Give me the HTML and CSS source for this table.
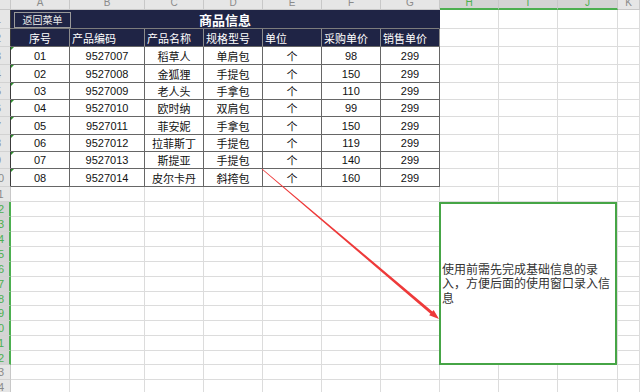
FILE: index.html
```html
<!DOCTYPE html>
<html lang="zh">
<head>
<meta charset="utf-8">
<title>商品信息</title>
<link rel="stylesheet" href="styles.css">
</head>
<body>
<div class="sheet">
  <div class="row hdr">
    <span class="corner"></span>
    <span>A</span><span>B</span><span>C</span><span>D</span><span>E</span><span>F</span><span>G</span><span class="sel">H</span><span class="sel">I</span><span class="sel">J</span><span>K</span>
  </div>
  <div class="row h19">
    <span class="rn tb"><em>1</em></span>
    <span class="title"><button class="back">返回菜单</button>商品信息</span>
    <span></span><span></span><span></span><span></span>
  </div>
  <div class="row h18">
    <span class="rn tb"><em>2</em></span>
    <span class="th a">序号</span><span class="th">产品编码</span><span class="th">产品名称</span><span class="th">规格型号</span><span class="th">单位</span><span class="th">采购单价</span><span class="th">销售单价</span>
    <span></span><span></span><span></span><span></span>
  </div>
  <div class="row h18">
    <span class="rn tb"><em>3</em></span>
    <span class="t a">01</span><span class="t">9527007</span><span class="t">稻草人</span><span class="t">单肩包</span><span class="t">个</span><span class="t">98</span><span class="t">299</span>
    <span></span><span></span><span></span><span></span>
  </div>
  <div class="row h18">
    <span class="rn tb"><em>4</em></span>
    <span class="t a">02</span><span class="t">9527008</span><span class="t">金狐狸</span><span class="t">手提包</span><span class="t">个</span><span class="t">150</span><span class="t">299</span>
    <span></span><span></span><span></span><span></span>
  </div>
  <div class="row h17">
    <span class="rn tb"><em>5</em></span>
    <span class="t a">03</span><span class="t">9527009</span><span class="t">老人头</span><span class="t">手拿包</span><span class="t">个</span><span class="t">110</span><span class="t">299</span>
    <span></span><span></span><span></span><span></span>
  </div>
  <div class="row h17">
    <span class="rn tb"><em>6</em></span>
    <span class="t a">04</span><span class="t">9527010</span><span class="t">欧时纳</span><span class="t">双肩包</span><span class="t">个</span><span class="t">99</span><span class="t">299</span>
    <span></span><span></span><span></span><span></span>
  </div>
  <div class="row h18">
    <span class="rn tb"><em>7</em></span>
    <span class="t a">05</span><span class="t">9527011</span><span class="t">菲安妮</span><span class="t">手拿包</span><span class="t">个</span><span class="t">150</span><span class="t">299</span>
    <span></span><span></span><span></span><span></span>
  </div>
  <div class="row h17">
    <span class="rn tb"><em>8</em></span>
    <span class="t a">06</span><span class="t">9527012</span><span class="t">拉菲斯丁</span><span class="t">手提包</span><span class="t">个</span><span class="t">119</span><span class="t">299</span>
    <span></span><span></span><span></span><span></span>
  </div>
  <div class="row h17">
    <span class="rn tb"><em>9</em></span>
    <span class="t a">07</span><span class="t">9527013</span><span class="t">斯提亚</span><span class="t">手提包</span><span class="t">个</span><span class="t">140</span><span class="t">299</span>
    <span></span><span></span><span></span><span></span>
  </div>
  <div class="row h18">
    <span class="rn tb"><em>10</em></span>
    <span class="t a">08</span><span class="t">9527014</span><span class="t">皮尔卡丹</span><span class="t">斜挎包</span><span class="t">个</span><span class="t">160</span><span class="t">299</span>
    <span></span><span></span><span></span><span></span>
  </div>
  <div class="row h15"><span class="rn"><em>11</em></span><span></span><span></span><span></span><span></span><span></span><span></span><span></span><span></span><span></span><span></span><span></span></div>
  <div class="row h15"><span class="rn on"><em>12</em></span><span></span><span></span><span></span><span></span><span></span><span></span><span></span><span></span><span></span><span></span><span></span></div>
  <div class="row h15"><span class="rn on"><em>13</em></span><span></span><span></span><span></span><span></span><span></span><span></span><span></span><span></span><span></span><span></span><span></span></div>
  <div class="row h15"><span class="rn on"><em>14</em></span><span></span><span></span><span></span><span></span><span></span><span></span><span></span><span></span><span></span><span></span><span></span></div>
  <div class="row h15"><span class="rn on"><em>15</em></span><span></span><span></span><span></span><span></span><span></span><span></span><span></span><span></span><span></span><span></span><span></span></div>
  <div class="row h15"><span class="rn on"><em>16</em></span><span></span><span></span><span></span><span></span><span></span><span></span><span></span><span></span><span></span><span></span><span></span></div>
  <div class="row h15"><span class="rn on"><em>17</em></span><span></span><span></span><span></span><span></span><span></span><span></span><span></span><span></span><span></span><span></span><span></span></div>
  <div class="row h14"><span class="rn on"><em>18</em></span><span></span><span></span><span></span><span></span><span></span><span></span><span></span><span></span><span></span><span></span><span></span></div>
  <div class="row h15"><span class="rn on"><em>19</em></span><span></span><span></span><span></span><span></span><span></span><span></span><span></span><span></span><span></span><span></span><span></span></div>
  <div class="row h15"><span class="rn on"><em>20</em></span><span></span><span></span><span></span><span></span><span></span><span></span><span></span><span></span><span></span><span></span><span></span></div>
  <div class="row h15"><span class="rn on"><em>21</em></span><span></span><span></span><span></span><span></span><span></span><span></span><span></span><span></span><span></span><span></span><span></span></div>
  <div class="row h14"><span class="rn on"><em>22</em></span><span></span><span></span><span></span><span></span><span></span><span></span><span></span><span></span><span></span><span></span><span></span></div>
  <div class="row h15"><span class="rn"><em>23</em></span><span></span><span></span><span></span><span></span><span></span><span></span><span></span><span></span><span></span><span></span><span></span></div>
  <div class="row h15"><span class="rn"><em>24</em></span><span></span><span></span><span></span><span></span><span></span><span></span><span></span><span></span><span></span><span></span><span></span></div>

  <div class="note">使用前需先完成基础信息的录入，方便后面的使用窗口录入信息</div>

  <svg class="arrow" width="640" height="392" viewBox="0 0 640 392" aria-hidden="true">
    <polygon points="262.26,168.69 432.37,311.46 433.66,309.93 439,319 429.14,315.27 430.43,313.74 261.74,169.31" fill="#ee3a3a"/>
  </svg>
</div>
</body>
</html>
```
FILE: styles.css
```css
* { box-sizing: border-box; margin: 0; padding: 0; }
html, body { width: 640px; height: 392px; overflow: hidden; background: #fff; }
body {
  font-family: "Liberation Sans", "Noto Sans CJK SC", sans-serif;
  font-size: 11px;
  color: #111;
}
.sheet { position: relative; width: 640px; }

.row {
  display: grid;
  grid-template-columns: 11px 59px 75px 59px 59px 59px 59px 59px 59px 59px 60px 1fr;
}
.row > * {
  border-right: 1px solid #dcdcdc;
  border-bottom: 1px solid #dcdcdc;
  display: flex;
  align-items: center;
  justify-content: center;
  overflow: hidden;
  white-space: nowrap;
  min-width: 0;
}
.hdr { height: 10px; }
.h19 { height: 19px; }
.h18 { height: 18px; }
.h17 { height: 17px; }
.h15 { height: 15px; }
.h14 { height: 14px; }

/* column header */
.hdr > * {
  background: #e6e6e6;
  border-right-color: #c8c8c8;
  border-bottom-color: #c8c8c8;
  color: #8a8a8a;
  font-size: 10px;
  line-height: 0;
  align-items: flex-start;
  padding-top: 3px;
}
.hdr > .sel {
  background: #d4d4d4;
  color: #4caf50;
  border-bottom: 2px solid #4caf50;
}

/* row numbers */
.rn {
  background: #e6e6e6;
  border-right-color: #c8c8c8 !important;
  border-bottom-color: #d2d2d2 !important;
  color: #8a8a8a;
  justify-content: flex-start !important;
}
.rn em {
  font-style: normal;
  flex: none;
  display: block;
  width: 32px;
  margin-left: -18px;
  text-align: center;
}
.rn.tb { border-right-color: #3c3c3c !important; }
.rn.on {
  background: #d4d4d4;
  color: #4caf50;
  border-right: 2px solid #4caf50 !important;
}

/* title row */
.title {
  grid-column: span 7;
  position: relative;
  background: #1f2445;
  color: #fff;
  font-weight: bold;
  font-size: 13px;
  font-family: "Noto Sans CJK SC", sans-serif;
  border-right-color: #1f2445 !important;
  border-bottom: 1px solid #7c7c7c !important;
}
.back {
  position: absolute;
  left: 3px;
  top: 2px;
  width: 57px;
  height: 16px;
  background: #1f2445;
  border: 1px solid #9a9a9a;
  color: #eaeaea;
  font-family: "Noto Sans CJK SC", sans-serif;
  font-size: 10px;
  font-weight: normal;
  line-height: 14px;
  cursor: pointer;
}

/* header row */
.th {
  background: #1f2445;
  color: #fff;
  font-family: "Noto Sans CJK SC", sans-serif;
  justify-content: flex-start !important;
  padding-left: 2px;
  border-right-color: #8c8c8c !important;
  border-bottom-color: #666 !important;
}
.th.a { justify-content: center !important; padding-left: 0; }

/* data cells */
.t {
  background: #fff;
  color: #111;
  border-right-color: #666 !important;
  border-bottom-color: #666 !important;
}
.t.a { position: relative; }
.t.a::before {
  content: "";
  position: absolute;
  left: 0;
  top: 0;
  border-top: 3px solid #2f8f2f;
  border-right: 3px solid transparent;
}

/* text box shape */
.note {
  position: absolute;
  left: 439px;
  top: 202px;
  width: 178px;
  height: 163px;
  border: 2px solid #46a546;
  background: #fff;
  display: flex;
  align-items: center;
  padding: 0 2px 0 1px;
  font-family: "Noto Sans CJK SC", sans-serif;
  font-size: 12px;
  line-height: 14.5px;
  color: #333;
}

.arrow {
  position: absolute;
  left: 0;
  top: 0;
  pointer-events: none;
}
```
